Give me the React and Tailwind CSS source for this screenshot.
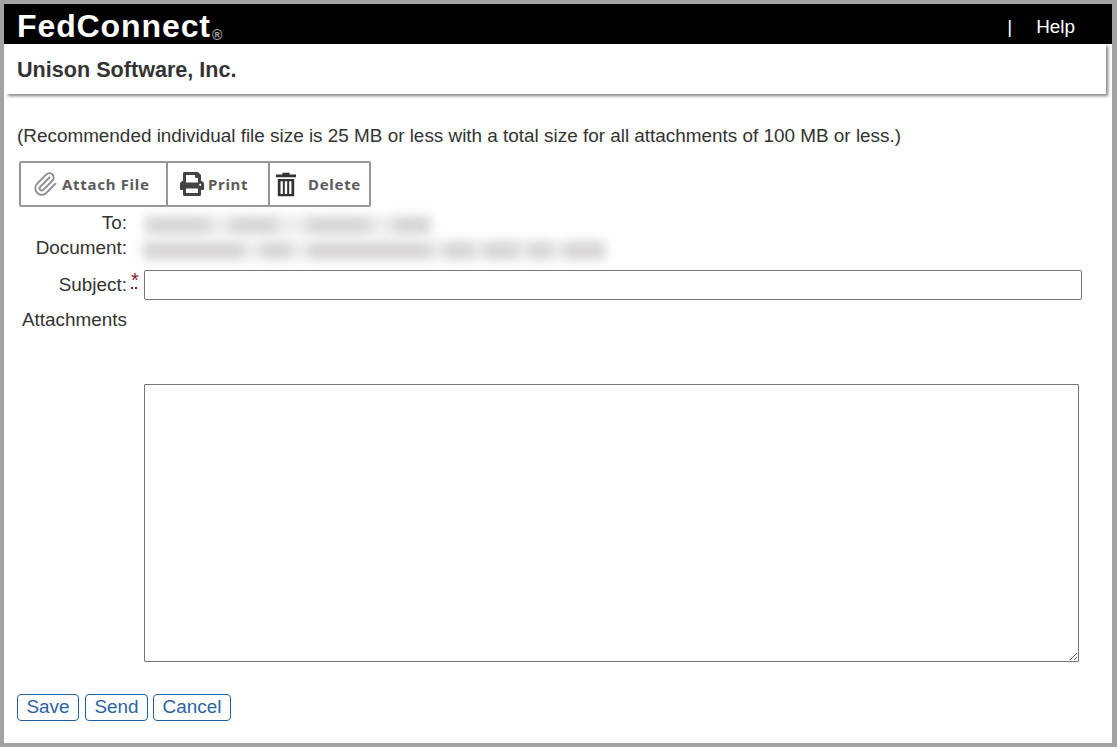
import { FaPrint } from 'react-icons/fa';
import { Paperclip } from 'lucide-react';

const toolBtn = "h-[46px] flex items-center bg-white border-2 border-[#969696] rounded-[2px] -mr-[2px] font-['Noto_Sans',sans-serif] font-bold text-[15px] tracking-[0.7px] text-[#5c5c5c]";
const actionBtn = "h-[27px] bg-white border border-[#1f5fa3] rounded-[4px] text-[18.9px] leading-none text-[#2b64a5]";

const toBlur = [[3, 63], [20, 47], [30, 63], [23, 37]];
const docBlur = [[0, 100], [17, 30], [17, 123], [13, 30], [10, 34], [10, 23], [13, 40]];

function Blurred({ parts, className }) {
  return (
    <div className={`relative flex items-center ${className}`}>
      <div className="absolute inset-0 bg-[#efeeee] blur-[5px]" />
      {parts.map(([gap, width], i) => (
        <span key={i} className="relative h-[13px] bg-[#d2d0d0] blur-[6px]" style={{ marginLeft: gap, width }} />
      ))}
    </div>
  );
}

function TrashIcon() {
  return (
    <svg viewBox="0 0 22 26" className="w-[20px] h-[25px] mr-[12px] shrink-0" fill="#333333">
      <path d="M7 0h8v2h7v3H0V2h7z" />
      <path d="M2 7h18v19H2zM5 9.500v14h2.500v-14zM9.700 9.500v14h2.600v-14zM14.500 9.500v14H17v-14z" fillRule="evenodd" />
    </svg>
  );
}

export default function App() {
  return (
    <div className="w-[1117px] h-[747px] overflow-hidden bg-white border-[4px] border-r-[5px] border-[#a3a3a3] font-['Liberation_Sans',Arial,sans-serif] text-[#333333] text-[18.9px]">
      {/* Header */}
      <div className="h-[40px] bg-black flex items-center justify-between">
        <div className="flex items-end pl-[13px] mt-[4px] text-white font-bold text-[32px] leading-none tracking-[0.9px]">
          FedConnect
          <span className="ml-[1px] text-[14px] font-bold text-[#a8a8a8] tracking-normal">®</span>
        </div>
        <div className="flex items-center text-white mt-[6px] pr-[37px]">
          <span>|</span>
          <span className="ml-[24px]">Help</span>
        </div>
      </div>

      {/* Company bar */}
      <div className="h-[50px] ml-[2px] mr-[6px] flex items-center pl-[11px] bg-white shadow-[2px_2px_3px_rgba(60,60,60,0.65)]">
        <h1 className="font-bold text-[21.600px] text-[#333333] mt-[2px]">Unison Software, Inc.</h1>
      </div>

      <div className="pl-[13px] pt-[30px]">
        <p className="leading-[24px]">(Recommended individual file size is 25 MB or less with a total size for all attachments of 100 MB or less.)</p>

        {/* Toolbar */}
        <div className="flex mt-[13px] ml-[2px]">
          <button className={`${toolBtn} w-[149px] pl-[11px]`}>
            <Paperclip className="w-[26px] h-[26px] text-[#8a8a8a] mr-[4px]" strokeWidth={1.700} />
            Attach File
          </button>
          <button className={`${toolBtn} w-[104px] pl-[12px]`}>
            <FaPrint className="w-[24px] h-[24px] text-[#444444] mr-[4px]" />
            Print
          </button>
          <button className={`${toolBtn} w-[103px] pl-[6px]`}>
            <TrashIcon />
            Delete
          </button>
        </div>

        {/* Form rows */}
        <div className="grid grid-cols-[110px_1fr] gap-x-[17px] mt-[3px]">
          <div className="text-right h-[30px] leading-[25px]">To:</div>
          <div className="h-[30px] pt-[5px]">
            <Blurred parts={toBlur} className="w-[286px] h-[20px]" />
          </div>
          <div className="text-right h-[30px] leading-[16px]">Document:</div>
          <div className="h-[30px]">
            <Blurred parts={docBlur} className="w-[462px] h-[20px]" />
          </div>
          <div className="relative text-right h-[38px] leading-[30px]">
            Subject:
            <span className="absolute left-[114px] top-0 text-[#8a1538] text-[20px] leading-none">*</span>
            <span className="absolute left-[114px] top-[17px] w-[6px] h-[2px] border-x-2 border-[#8a1538]" />
          </div>
          <div className="h-[38px]">
            <input className="block w-[938px] h-[30px] bg-white border border-[#767676] rounded-[2px]" />
          </div>
          <div className="text-right h-[76px] leading-[24px]">Attachments</div>
          <div className="h-[76px]" />
          <div />
          <textarea className="block w-[935px] h-[278px] bg-white border border-[#767676] rounded-[1px]" />
        </div>

        {/* Actions */}
        <div className="flex mt-[32px]">
          <button className={`${actionBtn} w-[62px]`}>Save</button>
          <button className={`${actionBtn} w-[63px] ml-[6px]`}>Send</button>
          <button className={`${actionBtn} w-[78px] ml-[5px]`}>Cancel</button>
        </div>
      </div>
    </div>
  );
}
